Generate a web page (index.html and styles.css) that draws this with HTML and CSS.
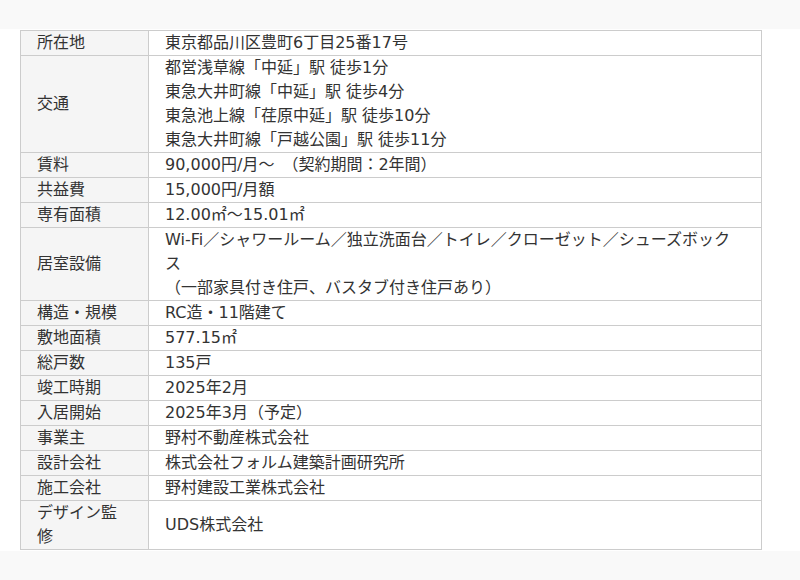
FILE: index.html
```html
<!DOCTYPE html>
<html lang="ja">
<head>
<meta charset="utf-8">
<title>物件概要</title>
<link rel="stylesheet" href="styles.css">
</head>
<body>
<section class="outline">
  <table class="spec">
    <tbody>
      <tr><th>所在地</th><td>東京都品川区豊町6丁目25番17号</td></tr>
      <tr><th>交通</th><td>都営浅草線「中延」駅 徒歩1分<br>東急大井町線「中延」駅 徒歩4分<br>東急池上線「荏原中延」駅 徒歩10分<br>東急大井町線「戸越公園」駅 徒歩11分</td></tr>
      <tr><th>賃料</th><td>90,000円/月～　（契約期間：2年間）</td></tr>
      <tr><th>共益費</th><td>15,000円/月額</td></tr>
      <tr><th>専有面積</th><td>12.00<span class="unit">㎡</span>～15.01<span class="unit">㎡</span></td></tr>
      <tr><th>居室設備</th><td>Wi-Fi／シャワールーム／独立洗面台／トイレ／クローゼット／シューズボックス<br>（一部家具付き住戸、バスタブ付き住戸あり）</td></tr>
      <tr><th>構造・規模</th><td>RC造・11階建て</td></tr>
      <tr><th>敷地面積</th><td>577.15<span class="unit">㎡</span></td></tr>
      <tr><th>総戸数</th><td>135戸</td></tr>
      <tr><th>竣工時期</th><td>2025年2月</td></tr>
      <tr><th>入居開始</th><td>2025年3月（予定）</td></tr>
      <tr><th>事業主</th><td>野村不動産株式会社</td></tr>
      <tr><th>設計会社</th><td>株式会社フォルム建築計画研究所</td></tr>
      <tr><th>施工会社</th><td>野村建設工業株式会社</td></tr>
      <tr><th>デザイン監修</th><td>UDS株式会社</td></tr>
    </tbody>
  </table>
</section>
</body>
</html>
```
FILE: styles.css
```css
html, body {
  margin: 0;
  padding: 0;
}
body {
  background: #f9f9f9;
  font-family: "DejaVu Sans", "Noto Sans CJK JP", sans-serif;
  font-size: 16px;
  line-height: 24px;
  color: #333;
}
.outline {
  margin-top: 29px;
  background: #fff;
  padding: 1px 0 1px 20px;
}
.spec {
  width: 742px;
  border-collapse: collapse;
  table-layout: fixed;
}
.spec th,
.spec td {
  border: 1px solid #ccc;
  padding: 0 16px;
  text-align: left;
  vertical-align: middle;
  font-weight: normal;
}
.spec th {
  width: 95px;
  background: #f5f5f5;
}
.unit {
  font-family: "Noto Sans CJK JP", sans-serif;
  line-height: 1;
}
```
